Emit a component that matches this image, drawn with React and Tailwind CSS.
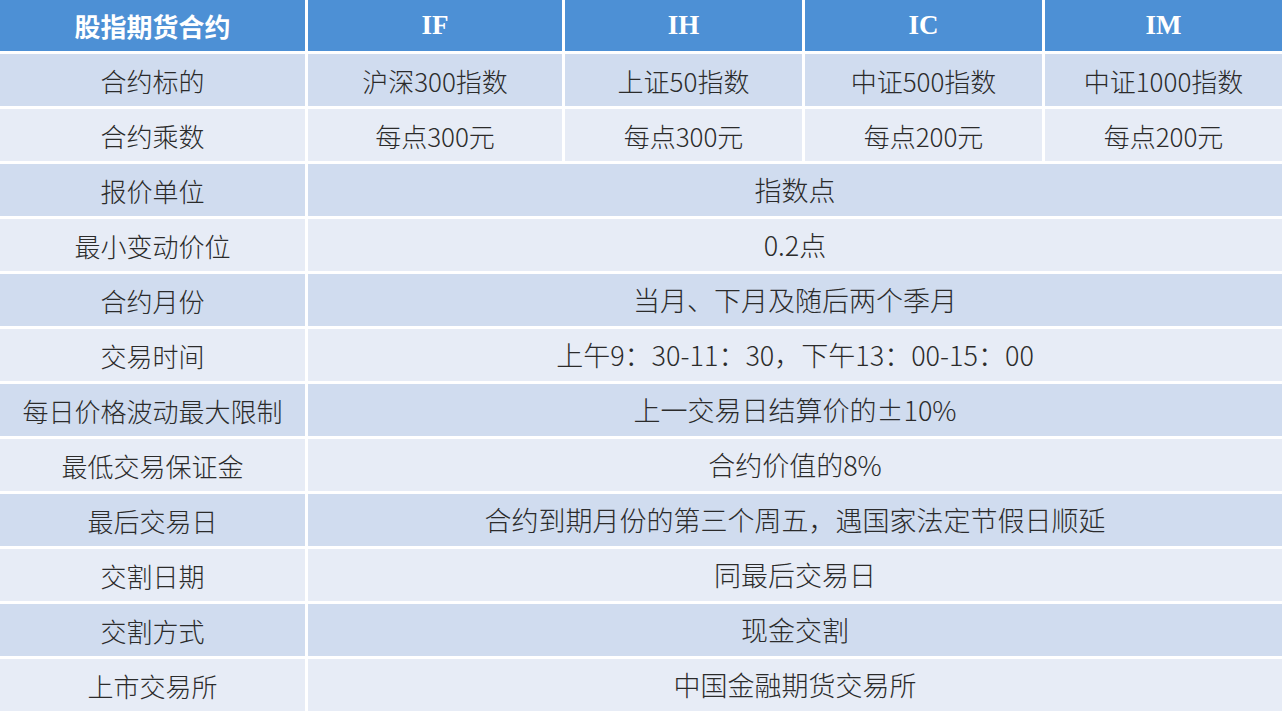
import React from "react";

const rows = [
  ["合约标的", ["沪深300指数", "上证50指数", "中证500指数", "中证1000指数"]],
  ["合约乘数", ["每点300元", "每点300元", "每点200元", "每点200元"]],
  ["报价单位", "指数点"],
  ["最小变动价位", "0.2点"],
  ["合约月份", "当月、下月及随后两个季月"],
  ["交易时间", "上午9：30-11：30，下午13：00-15：00"],
  ["每日价格波动最大限制", "上一交易日结算价的±10%"],
  ["最低交易保证金", "合约价值的8%"],
  ["最后交易日", "合约到期月份的第三个周五，遇国家法定节假日顺延"],
  ["交割日期", "同最后交易日"],
  ["交割方式", "现金交割"],
  ["上市交易所", "中国金融期货交易所"],
];

const cjk = { fontFamily: '"Noto Sans CJK SC", "Noto Sans", sans-serif' };
const head = { fontFamily: '"Liberation Serif", "Noto Sans CJK SC", serif' };

export default function App() {
  return (
    <div className="w-[1288px] h-[712px] bg-white overflow-hidden">
      <div className="grid grid-cols-[305px_254px_237px_237px_237px] grid-rows-[51px] auto-rows-[52px] gap-[3px] text-[#2b2b2b] font-light" style={cjk}>
        <div className="bg-[#4d90d5] flex items-center justify-center text-white font-bold text-[26px]" style={cjk}>股指期货合约</div>
        {["IF", "IH", "IC", "IM"].map((h) => (
          <div key={h} className="bg-[#4d90d5] flex items-center justify-center text-white font-bold text-[27px]" style={head}>{h}</div>
        ))}
        {rows.map(([label, val], i) => {
          const bg = i % 2 === 0 ? "bg-[#d0dcef]" : "bg-[#e7ecf6]";
          return (
            <React.Fragment key={label}>
              <div className={`${bg} flex items-center justify-center text-[26px]`}>{label}</div>
              {Array.isArray(val) ? (
                val.map((v, j) => (
                  <div key={j} className={`${bg} flex items-center justify-center text-[26px]`}>{v}</div>
                ))
              ) : (
                <div className={`${bg} col-span-4 flex items-center justify-center text-[27px]`}>{val}</div>
              )}
            </React.Fragment>
          );
        })}
      </div>
    </div>
  );
}
